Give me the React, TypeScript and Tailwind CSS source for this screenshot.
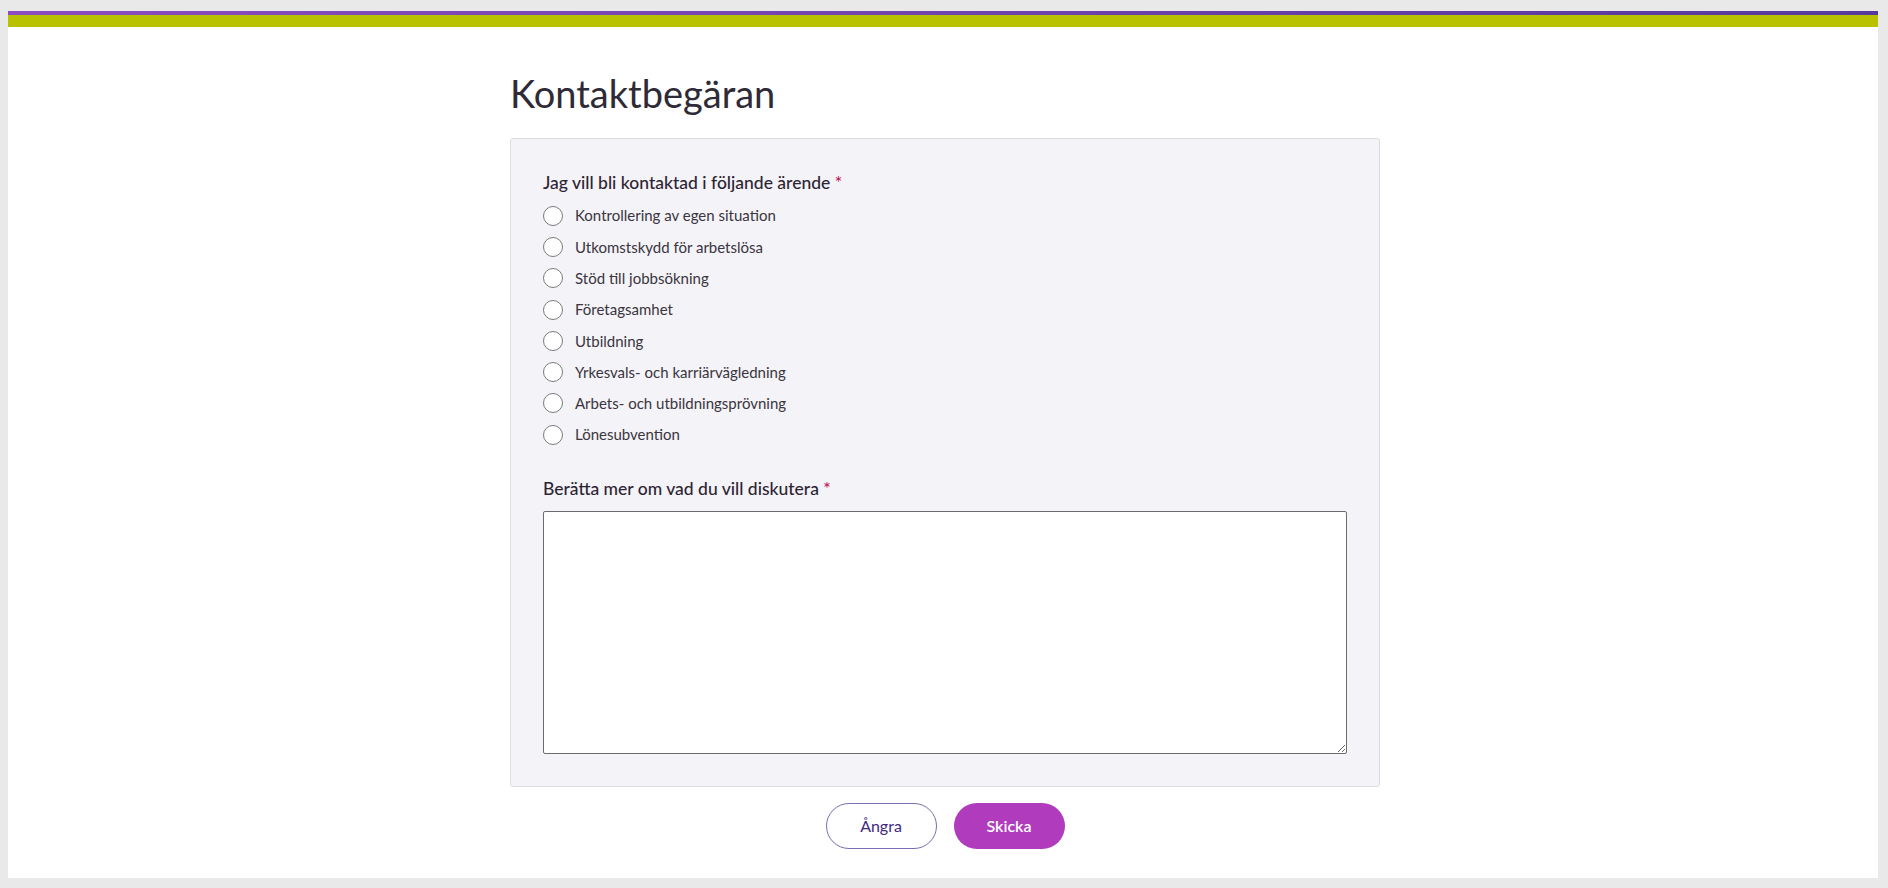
import React from "react";

const options = [
  "Kontrollering av egen situation",
  "Utkomstskydd för arbetslösa",
  "Stöd till jobbsökning",
  "Företagsamhet",
  "Utbildning",
  "Yrkesvals- och karriärvägledning",
  "Arbets- och utbildningsprövning",
  "Lönesubvention",
];

const RadioRow = ({ label }: { label: string }) => (
  <label className="flex items-center h-[31.3px] cursor-pointer">
    <span className="w-[20px] h-[20px] rounded-full border-[1.5px] border-[#7b7b7b] bg-white shrink-0" />
    <span className="ml-[12px] text-[15px] text-[#3a3540]">{label}</span>
  </label>
);

const App = () => {
  return (
    <div className="h-screen overflow-hidden bg-[#e9e9e9] pt-[11px] pl-[8px] pr-[10px] font-['Lato',sans-serif]">
      <div className="bg-white flex flex-col h-[867px]">
        <div className="h-[4px] bg-gradient-to-r from-[#8b4dbf] to-[#563a9c]" />
        <div className="h-[12px] bg-[#b9c200]" />
        <div className="w-[870px] ml-[502px] pt-[42px] flex flex-col">
          <h1 className="text-[38px] leading-[48px] text-[#2e2a36] mb-[21px]">Kontaktbegäran</h1>
          <div className="bg-[#f4f3f7] border border-[#dcdbe0] rounded-[3px] px-[32px] pt-[32px] pb-[32px]">
            <div className="text-[17.5px] leading-[24px] font-medium text-[#2d2433] mb-[5px]">
              Jag vill bli kontaktad i följande ärende <span className="text-[#c2185b]">*</span>
            </div>
            <div className="flex flex-col">
              {options.map((o) => (
                <RadioRow key={o} label={o} />
              ))}
            </div>
            <div className="mt-[27px] text-[17.5px] leading-[24px] font-medium text-[#2d2433]">
              Berätta mer om vad du vill diskutera <span className="text-[#c2185b]">*</span>
            </div>
            <textarea className="mt-[10px] w-full h-[243px] block bg-white border border-[#6b6b6b] rounded-[2px]" />
          </div>
          <div className="flex justify-center gap-[17px] mt-[16px]">
            <button className="w-[111px] h-[46px] rounded-full border border-[#7a6cb0] bg-white text-[16px] text-[#3f2a84]">
              Ångra
            </button>
            <button className="w-[111px] h-[46px] rounded-full bg-[#b03bbd] text-[16px] font-semibold text-white">
              Skicka
            </button>
          </div>
        </div>
      </div>
    </div>
  );
};

export default App;
